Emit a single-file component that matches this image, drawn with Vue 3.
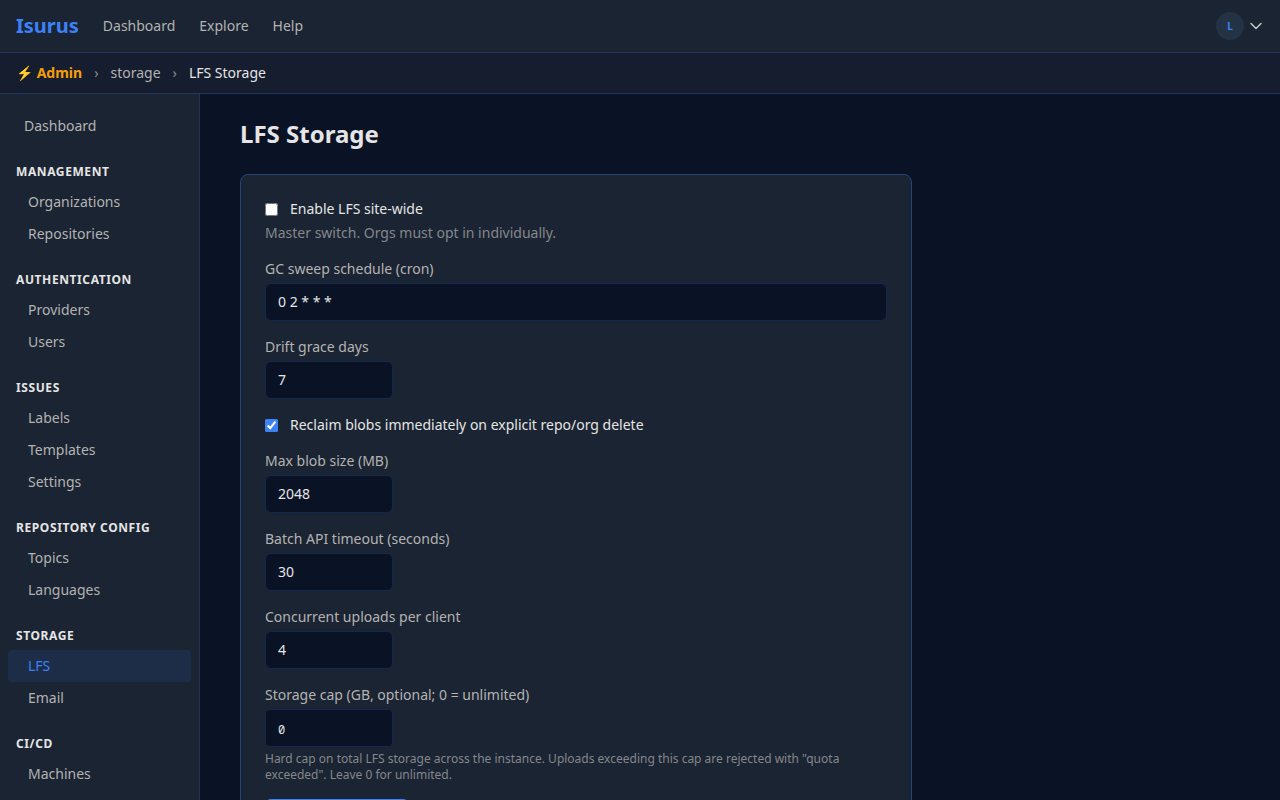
<script setup>
import { reactive } from 'vue'

const topLinks = ['Dashboard', 'Explore', 'Help']

const sections = [
  { title: 'Management', items: ['Organizations', 'Repositories'] },
  { title: 'Authentication', items: ['Providers', 'Users'] },
  { title: 'Issues', items: ['Labels', 'Templates', 'Settings'] },
  { title: 'Repository Config', items: ['Topics', 'Languages'] },
  { title: 'Storage', items: ['LFS', 'Email'] },
  { title: 'CI/CD', items: ['Machines'] },
]

const form = reactive({
  enabled: false,
  schedule: '0 2 * * *',
  graceDays: '7',
  reclaim: true,
  maxBlob: '2048',
  timeout: '30',
  uploads: '4',
  cap: '0',
})
</script>

<template>
  <div class="shell">
    <header class="topbar">
      <a class="brand" href="#">Isurus</a>
      <nav class="topnav" aria-label="Main">
        <a v-for="link in topLinks" :key="link" href="#">{{ link }}</a>
      </nav>
      <button class="account" type="button" aria-label="Account menu">
        <span class="avatar">L</span>
        <svg class="chevron" viewBox="0 0 16 16" aria-hidden="true">
          <path d="M3 5.5 8 10.5 13 5.5" fill="none" stroke="currentColor" stroke-width="1.5" stroke-linecap="round" stroke-linejoin="round" />
        </svg>
      </button>
    </header>

    <nav class="crumbs" aria-label="Breadcrumb">
      <a class="crumb-admin" href="#">⚡ Admin</a>
      <span class="sep">›</span>
      <a href="#">storage</a>
      <span class="sep">›</span>
      <span class="crumb-current">LFS Storage</span>
    </nav>

    <div class="body">
      <aside class="sidebar">
        <a class="side-link side-home" href="#">Dashboard</a>
        <section v-for="section in sections" :key="section.title">
          <h2 class="side-title">{{ section.title }}</h2>
          <a
            v-for="item in section.items"
            :key="item"
            class="side-link"
            :class="{ active: item === 'LFS' }"
            href="#"
          >{{ item }}</a>
        </section>
      </aside>

      <main class="main">
        <h1>LFS Storage</h1>
        <form class="card" @submit.prevent>
          <div class="field">
            <label class="check"><input v-model="form.enabled" type="checkbox" />Enable LFS site-wide</label>
            <p class="hint">Master switch. Orgs must opt in individually.</p>
          </div>
          <div class="field">
            <label for="schedule">GC sweep schedule (cron)</label>
            <input id="schedule" v-model="form.schedule" class="text wide" type="text" />
          </div>
          <div class="field">
            <label for="grace">Drift grace days</label>
            <input id="grace" v-model="form.graceDays" class="text" type="text" inputmode="numeric" />
          </div>
          <div class="field">
            <label class="check"><input v-model="form.reclaim" type="checkbox" />Reclaim blobs immediately on explicit repo/org delete</label>
          </div>
          <div class="field">
            <label for="blob">Max blob size (MB)</label>
            <input id="blob" v-model="form.maxBlob" class="text" type="text" inputmode="numeric" />
          </div>
          <div class="field">
            <label for="timeout">Batch API timeout (seconds)</label>
            <input id="timeout" v-model="form.timeout" class="text" type="text" inputmode="numeric" />
          </div>
          <div class="field">
            <label for="uploads">Concurrent uploads per client</label>
            <input id="uploads" v-model="form.uploads" class="text" type="text" inputmode="numeric" />
          </div>
          <div class="field">
            <label for="cap">Storage cap (GB, optional; 0 = unlimited)</label>
            <input id="cap" v-model="form.cap" class="text mono" type="text" inputmode="numeric" />
            <p class="hint small">Hard cap on total LFS storage across the instance. Uploads exceeding this cap are rejected with "quota exceeded". Leave 0 for unlimited.</p>
          </div>
          <button class="save" type="submit">Save LFS settings</button>
        </form>
      </main>
    </div>
  </div>
</template>

<style>
body {
  background: #0a1325;
}
</style>

<style scoped>
* {
  box-sizing: border-box;
}
.shell {
  display: flex;
  flex-direction: column;
  height: 100vh;
  background: #0a1325;
  color: #e5e5e5;
  font-family: "Noto Sans", sans-serif;
  font-size: 14px;
  line-height: 20px;
}
a {
  color: #b3b3b3;
  text-decoration: none;
}
.topbar {
  display: flex;
  align-items: center;
  flex-shrink: 0;
  gap: 24px;
  padding: 12px 16px;
  background: #1b2432;
  border-bottom: 1px solid #20375f;
}
.brand {
  color: #3b82f6;
  font-size: 20px;
  font-weight: 700;
  line-height: 28px;
}
.topnav {
  display: flex;
  gap: 24px;
}
.account {
  display: flex;
  align-items: center;
  gap: 4px;
  margin-left: auto;
  padding: 0;
  border: 0;
  background: none;
  color: #c4c6ca;
  font: inherit;
}
.avatar {
  width: 28px;
  height: 28px;
  border-radius: 50%;
  background: #233345;
  color: #3b82f6;
  font-size: 10px;
  font-weight: 700;
  line-height: 28px;
  text-align: center;
}
.chevron {
  width: 16px;
  height: 16px;
}
.crumbs {
  display: flex;
  align-items: center;
  flex-shrink: 0;
  gap: 12px;
  padding: 10px 16px;
  background: #151d2e;
  border-bottom: 1px solid #20375f;
}
.crumb-admin {
  color: #f59e0b;
  font-weight: 700;
}
.sep {
  color: #8a8d93;
}
.crumb-current {
  color: #e5e5e5;
}
.body {
  display: flex;
  flex: 1;
  min-height: 0;
}
.sidebar {
  flex: 0 0 200px;
  padding: 16px 8px;
  overflow-y: auto;
  scrollbar-width: none;
  background: #1b2432;
  border-right: 1px solid #22324d;
}
.side-title {
  margin: 16px 0 0;
  padding: 6px 8px;
  color: #e5e5e5;
  font-size: 12px;
  font-weight: 700;
  line-height: 16px;
  letter-spacing: 0.05em;
  text-transform: uppercase;
}
.side-link {
  display: block;
  padding: 6px 20px;
  border-radius: 4px;
}
.side-home {
  padding: 6px 16px;
}
.side-link.active {
  background: #1e2d47;
  color: #3b82f6;
}
.main {
  flex: 1;
  min-width: 0;
  padding: 24px 40px;
  overflow-y: auto;
  scrollbar-width: none;
}
h1 {
  margin: 0 0 24px;
  font-size: 24px;
  font-weight: 700;
  line-height: 32px;
}
.card {
  display: flex;
  flex-direction: column;
  align-items: stretch;
  gap: 16px;
  max-width: 672px;
  padding: 24px;
  background: #1b2432;
  border: 1px solid #244478;
  border-radius: 8px;
}
.field {
  display: flex;
  flex-direction: column;
  gap: 4px;
}
.field label {
  color: #b3b3b3;
}
.field .check {
  display: flex;
  align-items: center;
  gap: 12px;
  color: #e5e5e5;
}
.check input {
  width: 13px;
  height: 13px;
  margin: 0;
  accent-color: #3b82f6;
}
.text {
  width: 128px;
  height: 38px;
  padding: 7px 12px 9px;
  background: #0a1325;
  border: 1px solid #14284f;
  border-radius: 6px;
  color: #e5e5e5;
  font: inherit;
}
.wide {
  width: 100%;
}
.mono {
  padding: 9px 12px 7px;
  border-radius: 4px;
  font-family: "Noto Sans Mono", "Noto Sans Mono CJK SC", "DejaVu Sans Mono", monospace;
  font-size: 12px;
}
.hint {
  margin: 0;
  color: #84878d;
}
.small {
  font-size: 12px;
  line-height: 16px;
}
.save {
  align-self: flex-start;
  padding: 8px 16px;
  border: 0;
  border-radius: 6px;
  background: #3b82f6;
  color: #ffffff;
  font: inherit;
}
</style>
